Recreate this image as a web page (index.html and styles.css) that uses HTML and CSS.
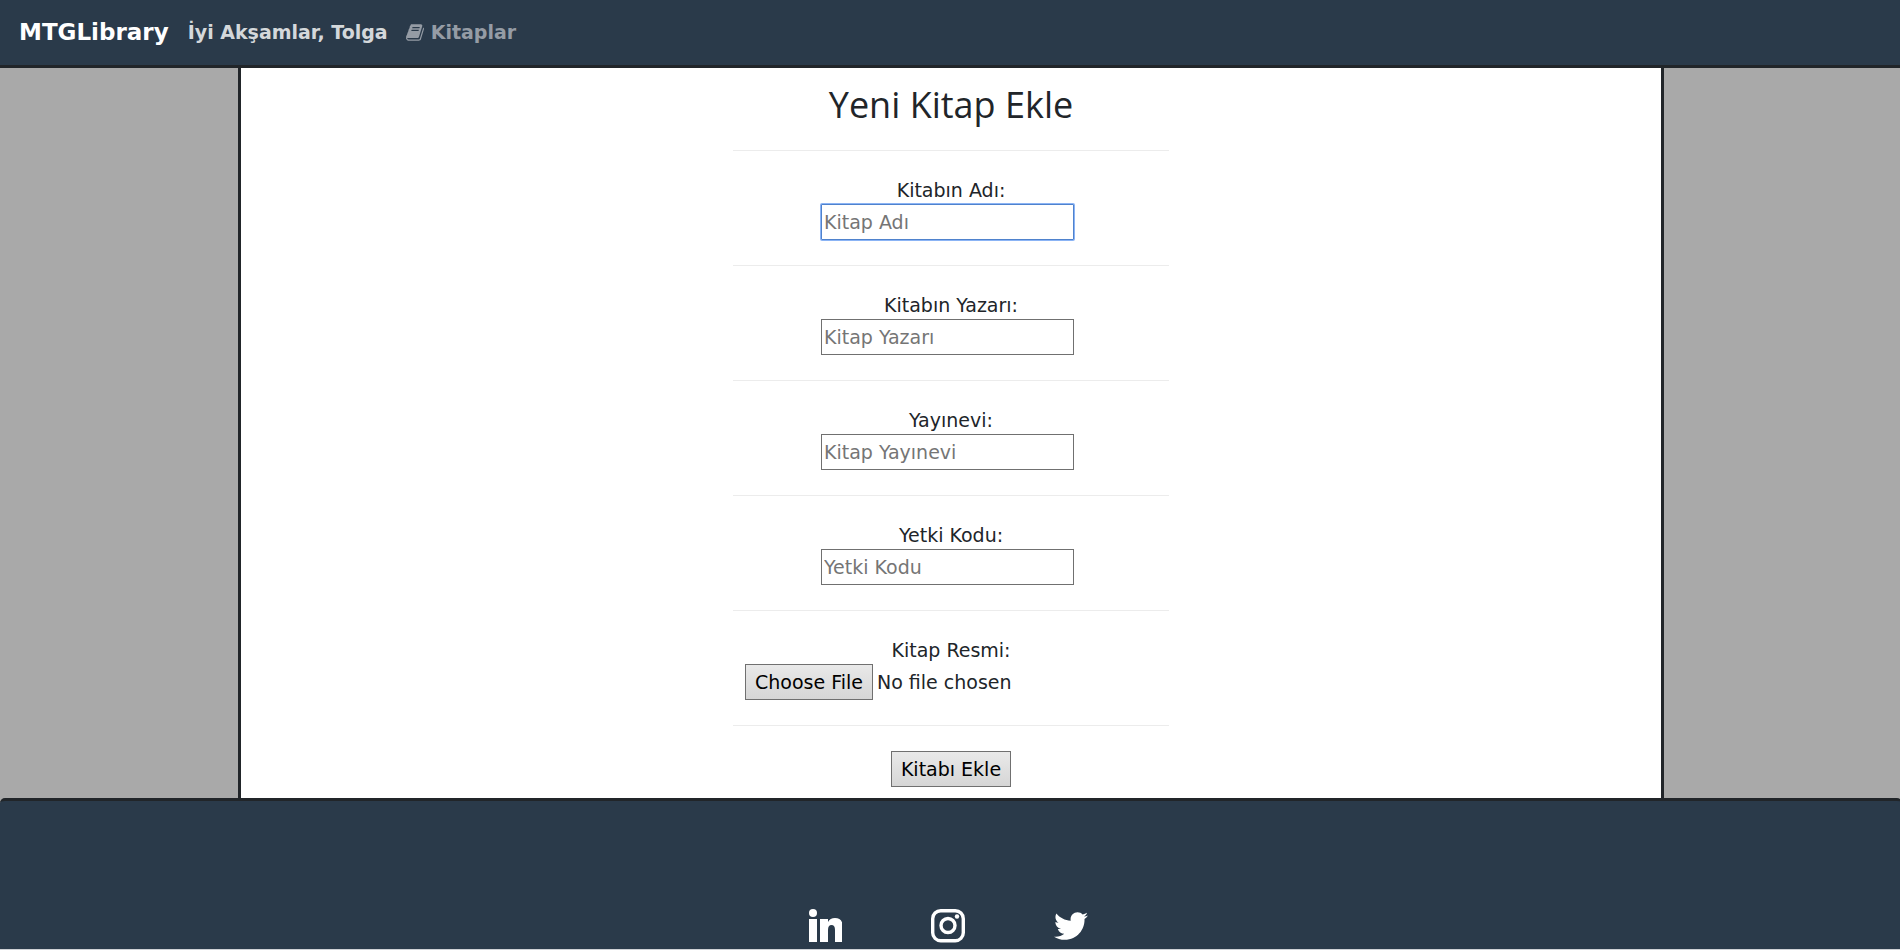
FILE: index.html
```html
<!DOCTYPE html>
<html lang="tr">
<head>
<meta charset="utf-8">
<title>MTGLibrary</title>
<link rel="stylesheet" href="styles.css">
</head>
<body>
<div class="page">
  <nav class="navbar">
    <a class="brand" href="#">MTGLibrary</a>
    <span class="greeting">İyi Akşamlar, Tolga</span>
    <a class="nav-link" href="#">
      <svg class="book-icon" viewBox="0 0 1664 1536" aria-hidden="true"><path fill="currentColor" d="M1639 350q40 57 18 129l-275 906q-19 64-76.500 107.500t-122.500 43.500h-923q-77 0-148.500-53.500t-99.500-131.500q-24-67-2-127 0-4 3-27t4-37q1-8-3-21.500t-3-19.500q2-11 8-21t16.500-23.500 16.500-23.500q23-38 45-91.500t30-91.500q3-10 .5-30t-.5-28q3-11 17-28t17-23q21-36 42-92t25-90q1-9-2.500-32t.5-28q4-13 22-30.500t22-22.500q19-26 42.500-84.500t27.500-96.500q1-8-3-25.500t-2-26.500q2-8 9-18t18-23 17-21q8-12 16.500-30.500t15-35 16-36 19.500-32 26.500-23.500 36-11.500 47.500 5.500l-1 3q38-9 51-9h761q74 0 114 56t18 130l-274 906q-36 119-71.500 153.500t-128.500 34.500h-869q-27 0-38 15-11 16-1 43 24 70 144 70h923q29 0 56-15.500t35-41.500l300-987q7-22 5-57 38 15 59 43zm-1064 2q-4 13 2 22.500t20 9.500h608q13 0 25.500-9.500t16.500-22.500l21-64q4-13-2-22.500t-20-9.500h-608q-13 0-25.500 9.500t-16.500 22.500zm-83 256q-4 13 2 22.500t20 9.500h608q13 0 25.500-9.500t16.500-22.500l21-64q4-13-2-22.500t-20-9.500h-608q-13 0-25.500 9.500t-16.500 22.500z"/></svg>
      <span>Kitaplar</span>
    </a>
  </nav>
  <main class="content">
    <form class="book-form">
      <h1 class="title">Yeni Kitap Ekle</h1>
      <div class="field">
        <label for="name">Kitabın Adı:</label>
        <input class="text-input is-active" id="name" type="text" placeholder="Kitap Adı">
      </div>
      <div class="field">
        <label for="author">Kitabın Yazarı:</label>
        <input class="text-input" id="author" type="text" placeholder="Kitap Yazarı">
      </div>
      <div class="field">
        <label for="publisher">Yayınevi:</label>
        <input class="text-input" id="publisher" type="text" placeholder="Kitap Yayınevi">
      </div>
      <div class="field">
        <label for="code">Yetki Kodu:</label>
        <input class="text-input" id="code" type="text" placeholder="Yetki Kodu">
      </div>
      <div class="field">
        <label for="image">Kitap Resmi:</label>
        <input class="file-input" id="image" type="file">
      </div>
      <div class="actions">
        <button class="submit" type="submit">Kitabı Ekle</button>
      </div>
    </form>
  </main>
  <footer class="footer">
    <a href="#" aria-label="LinkedIn"><svg viewBox="0 0 34 34"><circle cx="5" cy="4" r="4"/><path d="M1 10h8v23H1zM12 10h8v3q2-4 7-4 8 0 8 10v14h-8V21q0-5-3.500-5-3.500 0-3.500 5v12h-8z"/></svg></a>
    <a href="#" aria-label="Instagram"><svg viewBox="0 0 34 34"><rect x="1.700" y="1.700" width="30.600" height="30" rx="8" fill="none" stroke="#fff" stroke-width="3.400"/><circle cx="17" cy="16.500" r="7" fill="none" stroke="#fff" stroke-width="3.400"/><circle cx="26" cy="7.500" r="2.200"/></svg></a>
    <a href="#" aria-label="Twitter"><svg viewBox="0 0 512 512"><path d="M459.370 151.716c.325 4.548.325 9.097.325 13.645 0 138.720-105.583 298.558-298.558 298.558-59.452 0-114.680-17.219-161.137-47.106 8.447.974 16.568 1.299 25.340 1.299 49.055 0 94.213-16.568 130.274-44.832-46.132-.975-84.792-31.188-98.112-72.772 6.498.974 12.995 1.624 19.818 1.624 9.421 0 18.843-1.300 27.614-3.573-48.081-9.747-84.143-51.980-84.143-102.985v-1.299c13.969 7.797 30.214 12.670 47.431 13.319-28.264-18.843-46.781-51.005-46.781-87.391 0-19.492 5.197-37.360 14.294-52.954 51.655 63.675 129.300 105.258 216.365 109.807-1.624-7.797-2.599-15.918-2.599-24.040 0-57.828 46.782-104.934 104.934-104.934 30.213 0 57.502 12.670 76.670 33.137 23.715-4.548 46.456-13.320 66.599-25.340-7.798 24.366-24.366 44.833-46.132 57.827 21.117-2.273 41.584-8.122 60.426-16.243-14.292 20.791-32.161 39.308-52.628 54.253z"/></svg></a>
  </footer>
</div>
</body>
</html>
```
FILE: styles.css
```css
* {
  box-sizing: border-box;
}

html {
  background: #cfd2d6;
}

body {
  margin: 0;
  overflow-x: hidden;
  color: #212529;
  font-family: Tahoma, "DejaVu Sans", Verdana, sans-serif;
  font-size: 19px;
}

.page {
  margin-right: -2px;
  background: #a9a9a9;
}

.navbar {
  display: flex;
  align-items: center;
  height: 68px;
  padding: 0 19px 1px;
  background: #2a3a4a;
  border-bottom: 3px solid #212529;
  font-weight: 700;
}

.brand {
  margin-right: 19px;
  color: #fff;
  font-size: 23px;
  text-decoration: none;
}

.greeting {
  margin-right: 18px;
  color: #d4d8db;
}

.nav-link {
  display: flex;
  align-items: center;
  gap: 7px;
  color: #959ca5;
  text-decoration: none;
}

.book-icon {
  width: 18px;
  height: 17px;
}

.content {
  width: calc(75% - 1px);
  margin: 0 auto;
  padding-bottom: 11px;
  background: #fff;
  border: solid #212529;
  border-width: 0 3px;
}

.book-form {
  width: 436px;
  margin: 0 auto;
}

.title {
  margin: 0;
  padding: 13px 0 21px;
  font-family: "Segoe UI", "Open Sans", "Noto Sans", sans-serif;
  font-size: 36px;
  font-weight: 400;
  line-height: 48px;
  text-align: center;
}

.field {
  display: flex;
  flex-direction: column;
  align-items: center;
  padding: 25px 0 25px;
  border-top: 1px solid #ececec;
}

.field label {
  line-height: 28px;
}

.text-input,
.file-input {
  height: 36px;
  margin-right: 7px;
  color: inherit;
  font: inherit;
}

.text-input {
  width: 253px;
  padding: 0 2px;
  border: 1px solid #707070;
  border-radius: 0;
  outline: none;
}

.text-input::placeholder {
  color: #757575;
}

.text-input:focus,
.text-input.is-active {
  border-color: #4f82cd;
  box-shadow: 0 0 0 1px #8bb4f5;
  border-radius: 1px;
}

.file-input {
  width: 405px;
}

.file-input::file-selector-button,
.submit {
  height: 36px;
  padding: 0 9px;
  color: #000;
  font: inherit;
  background: linear-gradient(#e9e9e9, #d6d6d6);
  border: 1px solid #707070;
  border-radius: 0;
}

.file-input::file-selector-button {
  margin-right: 4px;
}

.actions {
  padding-top: 25px;
  border-top: 1px solid #ececec;
  text-align: center;
}

.submit {
  display: inline-block;
  vertical-align: top;
}

.footer {
  display: flex;
  justify-content: center;
  gap: 89px;
  padding: 108px 6px 6px 0;
  background: #2a3a4a;
  border-top: 3px solid #212529;
  border-radius: 5px 5px 0 0;
}

.footer a,
.footer svg {
  display: block;
  width: 34px;
  height: 34px;
}

.footer svg {
  fill: #fff;
}
```
